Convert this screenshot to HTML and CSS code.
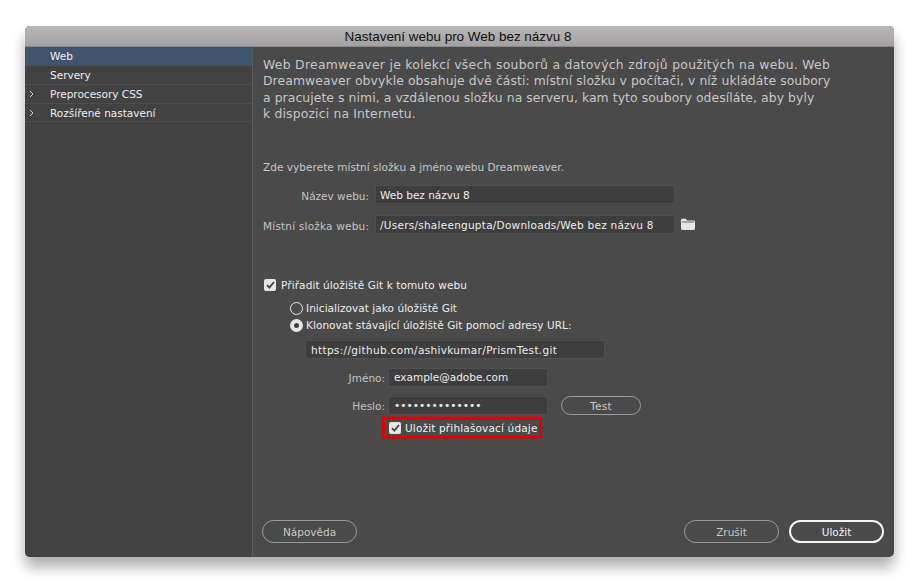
FILE: index.html
```html
<!DOCTYPE html>
<html lang="cs">
<head>
<meta charset="utf-8">
<title>Nastavení webu</title>
<link rel="stylesheet" href="styles.css">
</head>
<body>
<div class="window">
  <header class="titlebar">Nastavení webu pro Web bez názvu 8</header>
  <div class="main">
    <nav class="sidebar">
      <div class="nav-item active">Web</div>
      <div class="nav-item">Servery</div>
      <div class="nav-item"><svg class="chev" width="5" height="8" viewBox="0 0 5 8"><path d="M1 1l3 3-3 3" fill="none" stroke="#d0d0d0" stroke-width="1"/></svg>Preprocesory CSS</div>
      <div class="nav-item last"><svg class="chev" width="5" height="8" viewBox="0 0 5 8"><path d="M1 1l3 3-3 3" fill="none" stroke="#d0d0d0" stroke-width="1"/></svg>Rozšířené nastavení</div>
    </nav>
    <section class="content">
      <div class="intro">
        <div class="l1">Web Dreamweaver je kolekcí všech souborů a datových zdrojů použitých na webu. Web</div>
        <div class="l2">Dreamweaver obvykle obsahuje dvě části: místní složku v počítači, v níž ukládáte soubory</div>
        <div class="l3">a pracujete s nimi, a vzdálenou složku na serveru, kam tyto soubory odesíláte, aby byly</div>
        <div class="l4">k dispozici na Internetu.</div>
      </div>
      <p class="hint">Zde vyberete místní složku a jméno webu Dreamweaver.</p>
      <div class="row site-name">
        <label class="lbl lbl-site">Název webu:</label>
        <div class="field field-site">Web bez názvu 8</div>
      </div>
      <div class="row site-folder">
        <label class="lbl lbl-site wide-label">Místní složka webu:</label>
        <div class="field field-site wide-path">/Users/shaleengupta/Downloads/Web bez názvu 8</div>
        <svg class="folder" width="14" height="12" viewBox="0 0 14 12"><path d="M0 2a1.2 1.2 0 0 1 1.2-1.2h3.6L6.2 2.4h6.6A1.2 1.2 0 0 1 14 3.6V10.8A1.2 1.2 0 0 1 12.8 12H1.2A1.2 1.2 0 0 1 0 10.8Z" fill="#e6e6e6"/><path d="M.8 4h12.4" stroke="#4a4a4a" stroke-width=".8"/></svg>
      </div>
      <div class="check-row git">
        <span class="check"><svg width="9" height="8" viewBox="0 0 9 8"><path d="M1 4.2 3.4 6.6 8 1" fill="none" stroke="#444" stroke-width="1.8"/></svg></span>
        <span>Přiřadit úložiště Git k tomuto webu</span>
      </div>
      <div class="radio-row radio-one"><span class="radio"></span><span>Inicializovat jako úložiště Git</span></div>
      <div class="radio-row radio-two"><span class="radio on"></span><span>Klonovat stávající úložiště Git pomocí adresy URL:</span></div>
      <div class="field field-url">https://github.com/ashivkumar/PrismTest.git</div>
      <div class="row cred name">
        <label class="lbl lbl-cred">Jméno:</label>
        <div class="field field-cred">example@adobe.com</div>
      </div>
      <div class="row cred pass">
        <label class="lbl lbl-cred">Heslo:</label>
        <div class="field field-cred dots">••••••••••••••</div>
        <button class="btn btn-test">Test</button>
      </div>
      <div class="save-creds">
        <span class="check"><svg width="9" height="8" viewBox="0 0 9 8"><path d="M1 4.2 3.4 6.6 8 1" fill="none" stroke="#444" stroke-width="1.8"/></svg></span>
        <span>Uložit přihlašovací údaje</span>
      </div>
      <div class="actions">
        <button class="btn btn-foot">Nápověda</button>
        <div class="actions-right">
          <button class="btn btn-foot">Zrušit</button>
          <button class="btn btn-foot primary">Uložit</button>
        </div>
      </div>
    </section>
  </div>
</div>
</body>
</html>
```
FILE: styles.css
```css
* { box-sizing: border-box; }
html, body { margin: 0; height: 100%; }
body {
  background: #fff;
  padding: 26px 25px 25px;
  width: 919px;
  height: 582px;
  overflow: hidden;
  font-family: "DejaVu Sans", "Liberation Sans", sans-serif;
  font-size: 10.5px;
  color: #e4e4e4;
}
.window {
  width: 869px;
  height: 531px;
  display: flex;
  flex-direction: column;
  border-radius: 5px;
  overflow: hidden;
  background: #4a4a4a;
  box-shadow: 0 10px 14px rgba(0,0,0,.32);
}
.titlebar {
  height: 21px;
  flex: none;
  padding-right: 3px;
  background: linear-gradient(#b9b7b8, #a3a1a2);
  border-bottom: 1px solid #8a8a8a;
  color: #111;
  text-align: center;
  font-family: "Liberation Sans", sans-serif;
  font-size: 13.45px;
  line-height: 21px;
}
.main { flex: 1; display: flex; min-height: 0; }
.sidebar {
  width: 228px;
  flex: none;
  background: #424242;
  border-right: 1px solid #5a5a5a;
}
.nav-item {
  height: 19px;
  line-height: 18px;
  padding-left: 25px;
  border-bottom: 1px solid #4d4d4d;
  position: relative;
  color: #ececec;
}
.nav-item.last { height: 18px; }
.nav-item.active { background: #3f556e; border-bottom-color: #3f556e; color: #f2f2f2; }
.chev { position: absolute; left: 4px; top: 5px; }
.content {
  flex: 1;
  padding: 10px 10px 14px;
  display: flex;
  flex-direction: column;
  position: relative;
}
.intro {
  font-size: 12.4px;
  line-height: 16.3px;
  color: #c6c6c6;
  white-space: nowrap;
}
.l1 { letter-spacing: .28px; }
.l2 { letter-spacing: .08px; }
.l3 { letter-spacing: .07px; }
.l4 { letter-spacing: .16px; }
.hint { margin: 38px 0 0; color: #c6c6c6; line-height: 14px; white-space: nowrap; letter-spacing: .04px; }
.row { display: flex; align-items: center; }
.lbl { color: #c2c2c2; text-align: right; white-space: nowrap; }
.lbl-site { width: 106px; margin-right: 6px; margin-top: 2px; }
.lbl-cred { width: 122px; margin-right: 3px; }
.wide-label { letter-spacing: .2px; }
.field {
  height: 19px;
  line-height: 17px;
  background: #3e3e3e;
  border: 1px solid #505050;
  border-radius: 2px;
  padding-left: 4px;
  color: #ececec;
  white-space: nowrap;
}
.field-site { width: 300px; line-height: 18px; }
.wide-path { letter-spacing: .25px; }
.site-name { margin-top: 11px; }
.site-folder { margin-top: 11px; }
.folder { margin-left: 6px; margin-top: -2px; }
.check-row { display: flex; align-items: center; gap: 5px; line-height: 14px; color: #ececec; letter-spacing: .1px; }
.git { margin-top: 44px; margin-left: 1px; }
.check {
  width: 12px; height: 12px;
  background: #e6e6e6;
  border-radius: 2px;
  display: flex; align-items: center; justify-content: center;
  flex: none;
}
.radio-row { display: flex; align-items: center; gap: 3px; line-height: 14px; margin-left: 27px; color: #ececec; letter-spacing: .05px; }
.radio-one { margin-top: 9px; }
.radio-two { margin-top: 3px; }
.radio { width: 13px; height: 13px; border: 1px solid #e6e6e6; border-radius: 50%; flex: none; }
.radio.on { border: 4px solid #e6e6e6; background: #3e3e3e; }
.field-url { width: 300px; margin: 8px 0 0 42px; padding-left: 5px; letter-spacing: .33px; line-height: 18px; }
.cred.name { margin-top: 9px; }
.cred.pass { margin-top: 9px; }
.field-cred { width: 160px; padding-left: 5px; }
.dots { font-size: 10.6px; }
.btn {
  font-family: inherit;
  font-size: 10.5px;
  background: transparent;
  border: 1px solid #9a9a9a;
  border-radius: 12px;
  color: #c8c8c8;
  padding: 0;
  text-align: center;
}
.btn-test { width: 80px; height: 19px; border-radius: 10px; margin-left: 13px; letter-spacing: .3px; }
.save-creds {
  align-self: flex-start;
  margin: 2px 0 0 119px;
  width: 160px;
  height: 22px;
  border: 3px solid #e00000;
  display: flex;
  align-items: center;
  gap: 4px;
  padding-left: 4px;
  color: #f2f2f2;
  white-space: nowrap;
  letter-spacing: .16px;
}
.actions { margin-top: auto; display: flex; justify-content: space-between; margin-left: -1px; }
.actions-right { display: flex; gap: 10px; }
.btn-foot { width: 95px; height: 23px; }
.btn.primary { border: 2px solid #f2f2f2; color: #f4f4f4; }
```
